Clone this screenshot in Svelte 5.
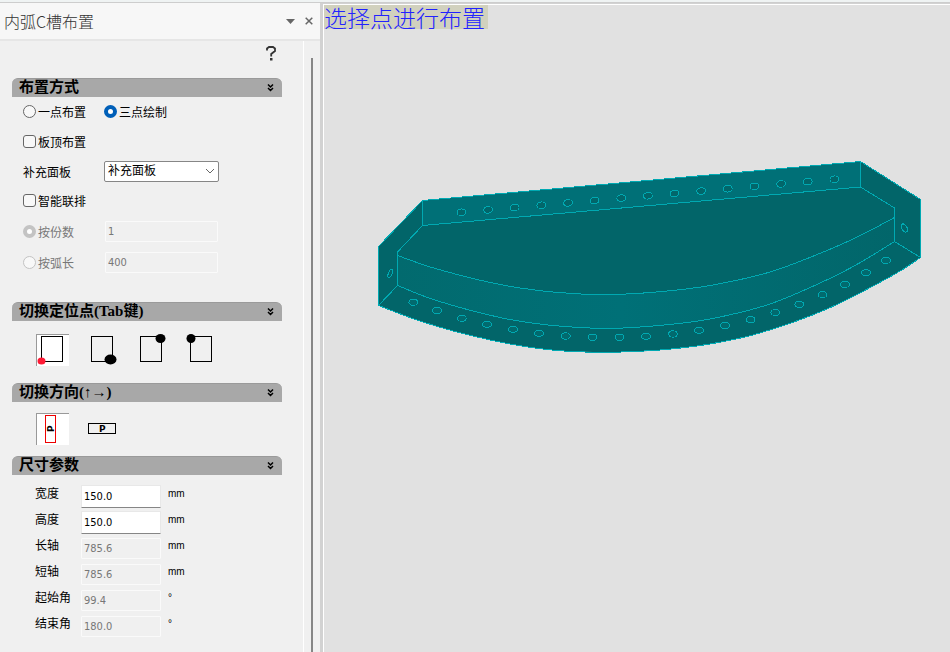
<script>
  let mode = $state('three');
  let panelTop = $state(false);
  let smartLayout = $state(false);
  let fillPanel = $state('补充面板');
  let anchor = $state('bl');
  let direction = $state('up');
  let open = $state({ mode: true, anchor: true, direction: true, size: true });

  const anchors = [
    { id: 'bl', label: '左下', x: 5, cx: 5.5, cy: 27, rx: 4, ry: 3.5 },
    { id: 'br', label: '右下', x: 5, cx: 24.5, cy: 25.5, rx: 6, ry: 5 },
    { id: 'tr', label: '右上', x: 4, cx: 24.5, cy: 4.5, rx: 5, ry: 4.5 },
    { id: 'tl', label: '左上', x: 4, cx: 5, cy: 4.5, rx: 4.5, ry: 4.5 }
  ];

  let sizes = $state([
    { id: 'width', label: '宽度', value: '150.0', unit: 'mm' },
    { id: 'height', label: '高度', value: '150.0', unit: 'mm' },
    { id: 'major', label: '长轴', value: '785.6', unit: 'mm', disabled: true },
    { id: 'minor', label: '短轴', value: '785.6', unit: 'mm', disabled: true },
    { id: 'start', label: '起始角', value: '99.4', unit: '°', disabled: true },
    { id: 'end', label: '结束角', value: '180.0', unit: '°', disabled: true }
  ]);

  // model arcs, in drawing units
  const plateArc = [[397.5, 255.5], [437, 269], [500, 284.5], [558, 292.5], [610, 294.5], [660, 291.7], [710, 285.5], [770, 272], [827, 250.5], [860, 235.7], [894.5, 217.5]];
  const innerArc = [[397.5, 285.5], [437, 300.7], [500, 317.5], [550, 325.2], [608, 328.4], [662, 325.2], [710, 319], [770, 304], [827, 279.8], [860, 262.7], [894.5, 241.5]];
  const outerArc = [[378.5, 305.5], [417, 320], [457, 332], [510, 344], [558, 350.6], [610, 352.3], [660, 350], [710, 344], [760, 333], [827, 309], [893, 275.2], [920.5, 257.5]];

  // Catmull-Rom through the points, as cubic segments
  function curve(pts) {
    let d = '';
    for (let i = 0; i < pts.length - 1; i++) {
      const a = pts[i - 1] ?? pts[i];
      const b = pts[i];
      const c = pts[i + 1];
      const e = pts[i + 2] ?? c;
      d += `C${b[0] + (c[0] - a[0]) / 6} ${b[1] + (c[1] - a[1]) / 6} ${c[0] - (e[0] - b[0]) / 6} ${c[1] - (e[1] - b[1]) / 6} ${c[0]} ${c[1]}`;
    }
    return d;
  }

  const plate = `M${plateArc[0]}` + curve(plateArc);
  const inner = `M${innerArc[0]}` + curve(innerArc);
  const outer = `M${outerArc[0]}` + curve(outerArc);
  const web = `${plate}L894.5 241.5${curve([...innerArc].reverse())}Z`;
  const body = `${outer}V199.5L860.5 161.5 422.5 200.5 378.5 246.5Z`;

  const topHoles = Array.from({ length: 15 }, (_, i) => [461.4 + i * 26.64, 212.3 - i * 2.36]);

  const arcHoles = [
    [413.3, 302.2], [437, 310.5], [461.8, 318.3], [487, 324.3], [513, 329.3],
    [539, 333.3], [565.8, 336], [592.5, 337.3], [619.4, 337.3], [646, 336.3],
    [673, 334], [699, 330.3], [725, 325.5], [750.6, 319.6], [775.3, 312.5],
    [799.3, 304.3], [822.5, 294.6], [845, 284.4], [866, 272.8], [886, 260.4]
  ];
</script>

{#snippet sectionHead(key, title)}
  <h2>
    <button class="section-head" aria-expanded={open[key]} onclick={() => (open[key] = !open[key])}>
      <span>{title}</span>
      <svg width="7" height="8" viewBox="0 0 7 8" aria-hidden="true">
        <path d="M1 .5 3.5 3 6 .5M1 4 3.5 6.5 6 4" />
      </svg>
    </button>
  </h2>
{/snippet}

<div class="app">
  <div class="strip"></div>
  <div class="main">
    <aside class="panel">
      <header class="titlebar">
        <h1>内弧C槽布置</h1>
        <button class="icon-btn" aria-label="菜单">
          <svg width="9" height="5" viewBox="0 0 9 5"><path d="M0 0h9L4.5 5z" fill="#666" /></svg>
        </button>
        <button class="icon-btn" aria-label="关闭">
          <svg width="8" height="8" viewBox="0 0 8 8"><path d="M.7 .7 7.3 7.3M7.3 .7 .7 7.3" stroke="#666" stroke-width="1.5" /></svg>
        </button>
      </header>

      <div class="scroll">
        <div class="content">
          <div class="help-row">
            <button class="icon-btn" aria-label="帮助">
              <svg width="10" height="15" viewBox="0 0 10 15">
                <path d="M1 4.5V2.5L3 1h4l2 1.5v2.5L5.2 8v2.5" fill="none" stroke="#333" stroke-width="1.8" />
                <path d="M4 12h2.5v2.5H4z" fill="#333" />
              </svg>
            </button>
          </div>

          <section class="mode">
            {@render sectionHead('mode', '布置方式')}
            {#if open.mode}
              <div class="options">
                <label class="check"><input type="radio" name="mode" value="one" bind:group={mode} />一点布置</label>
                <label class="check"><input type="radio" name="mode" value="three" bind:group={mode} />三点绘制</label>

                <label class="check wide"><input type="checkbox" bind:checked={panelTop} />板顶布置</label>

                <label for="fill">补充面板</label>
                <div class="select">
                  <select id="fill" bind:value={fillPanel}>
                    <option>补充面板</option>
                  </select>
                  <svg width="10" height="6" viewBox="0 0 10 6" aria-hidden="true"><path d="M1 1 5 5 9 1" /></svg>
                </div>

                <label class="check wide"><input type="checkbox" bind:checked={smartLayout} />智能联排</label>

                <label class="check off"><input type="radio" name="split" checked disabled />按份数</label>
                <input class="field" type="text" aria-label="份数" value="1" disabled />

                <label class="check off"><input type="radio" name="split" disabled />按弧长</label>
                <input class="field" type="text" aria-label="弧长" value="400" disabled />
              </div>
            {/if}
          </section>

          <section class="anchor">
            {@render sectionHead('anchor', '切换定位点(Tab键)')}
            {#if open.anchor}
              <div class="tools">
                {#each anchors as a (a.id)}
                  <button class="tool" class:active={anchor === a.id} aria-label={a.label} onclick={() => (anchor = a.id)}>
                    <svg width="33" height="33" viewBox="0 0 33 33">
                      <rect x={a.x + 0.5} y="2.5" width="21" height="25" fill="none" stroke="#000" />
                      <ellipse cx={a.cx} cy={a.cy} rx={a.rx} ry={a.ry} fill={anchor === a.id ? '#ff1a35' : '#000'} />
                    </svg>
                  </button>
                {/each}
              </div>
            {/if}
          </section>

          <section class="direction">
            {@render sectionHead('direction', '切换方向(↑→)')}
            {#if open.direction}
              <div class="tools">
                <button class="tool" class:active={direction === 'up'} aria-label="竖向" onclick={() => (direction = 'up')}>
                  <svg width="33" height="33" viewBox="0 0 33 33">
                    <rect x="9.5" y="2.5" width="10" height="27" fill="none" stroke={direction === 'up' ? '#e00' : '#000'} />
                    <text x="-19" y="18" transform="rotate(-90)">P</text>
                  </svg>
                </button>
                <button class="tool" class:active={direction === 'right'} aria-label="横向" onclick={() => (direction = 'right')}>
                  <svg width="33" height="33" viewBox="0 0 33 33">
                    <rect x="2.5" y="10.5" width="27" height="10" fill="none" stroke={direction === 'right' ? '#e00' : '#000'} />
                    <text x="13" y="19">P</text>
                  </svg>
                </button>
              </div>
            {/if}
          </section>

          <section>
            {@render sectionHead('size', '尺寸参数')}
            {#if open.size}
              <div class="sizes">
                {#each sizes as s (s.id)}
                  <label for={s.id}>{s.label}</label>
                  <input class="field" id={s.id} type="text" bind:value={s.value} disabled={s.disabled} />
                  <span class="unit">{s.unit}</span>
                {/each}
              </div>
            {/if}
          </section>
        </div>
        <div class="track"><div class="thumb"></div></div>
      </div>
    </aside>

    <main class="canvas">
      <p class="hint">选择点进行布置</p>
      <div class="model">
        <svg viewBox="378 161 543 192" role="img" aria-label="内弧C槽">
          <defs>
            <linearGradient id="web" x1="0" x2="1" y1="0" y2="0">
              <stop offset="0" stop-color="#026a6e" />
              <stop offset=".45" stop-color="#007077" />
              <stop offset="1" stop-color="#02666a" />
            </linearGradient>
          </defs>
          <path d={body} fill="#026569" />
          <path d="M422.5 200.5 860.5 161.5V187L422.5 225.5Z" fill="#007077" />
          <path d={web} fill="url(#web)" />
          <g class="edges" fill="none">
            <path d={body} />
            <path d="M378.5 305.5 397.5 285.5V252L422.5 225.5 860.5 187 894.5 208V241.5L920.5 257.5" />
            <path d="M422.5 200.5V225.5M860.5 161.5V187" />
            <path d={plate} />
            <path d={inner} />
            {#each topHoles as [x, y]}
              <ellipse cx={x} cy={y} rx="4.4" ry="3.3" transform="rotate(-6 {x} {y})" fill="#02666a" />
            {/each}
            {#each arcHoles as [x, y]}
              <ellipse cx={x} cy={y} rx="4.4" ry="3.2" fill="#026a6e" />
            {/each}
            <ellipse cx="390.3" cy="273.3" rx="1.8" ry="4.4" transform="rotate(22 390.3 273.3)" />
            <ellipse cx="904.4" cy="228" rx="2.6" ry="4.4" transform="rotate(-32 904.4 228)" />
          </g>
        </svg>
      </div>
    </main>
  </div>
</div>

<style>
  :global(body) {
    margin: 0;
    font-family: "DejaVu Sans Condensed", "Noto Sans CJK SC", sans-serif;
    font-size: 12px;
    color: #000;
  }

  h1, h2, p {
    margin: 0;
  }

  button, input, select {
    box-sizing: border-box;
    margin: 0;
    padding: 0;
    font: inherit;
    color: inherit;
  }

  .app {
    display: flex;
    flex-direction: column;
    min-height: 100vh;
  }

  .strip {
    box-sizing: border-box;
    height: 3px;
    background: #eff3f3;
    border-bottom: 1px solid #cdcdcd;
  }

  .main {
    display: flex;
    flex: 1;
    background: #d2d2d2;
  }

  .panel {
    display: flex;
    flex-direction: column;
    flex: none;
    width: 320px;
    background: #f0f0f0;
  }

  .titlebar {
    display: flex;
    align-items: center;
    gap: 10px;
    height: 36px;
    padding: 0 7px 0 4px;
    background: #f7f7f7;
    border-bottom: 2px solid #e6e6e6;
  }

  .titlebar h1 {
    flex: 1;
    font-family: "Noto Sans CJK SC", sans-serif;
    font-size: 16px;
    font-weight: 300;
    line-height: 20px;
    color: #333;
  }

  .icon-btn {
    display: flex;
    background: none;
    border: 0;
  }

  .scroll {
    display: flex;
    flex: 1;
  }

  .content {
    flex: 1;
    padding: 5px 21px 16px 12px;
  }

  .help-row {
    display: flex;
    justify-content: flex-end;
    height: 32px;
    padding-right: 6px;
  }

  .help-row .icon-btn {
    align-self: flex-start;
  }

  .track {
    width: 9px;
    padding: 17px 0 0 7px;
    border-left: 1px solid #fff;
  }

  .thumb {
    width: 2px;
    height: 100%;
    background: #868686;
  }

  .section-head {
    display: flex;
    align-items: center;
    justify-content: space-between;
    width: 100%;
    height: 19px;
    padding: 0 8px 1px 7px;
    background: #a8a8a8;
    border: 1px solid #9a9a9a;
    border-width: 1px 0 0;
    border-radius: 6px 6px 0 0;
    font-family: "Liberation Serif", "Noto Sans CJK SC", serif;
    font-size: 15px;
    font-weight: bold;
    line-height: 17px;
  }

  .section-head path {
    fill: none;
    stroke: #000;
    stroke-width: 1.5;
  }

  .mode {
    margin-bottom: 25px;
  }

  .anchor {
    margin-bottom: 17px;
  }

  .direction {
    margin-bottom: 11px;
  }

  .options {
    display: grid;
    grid-template-columns: 81px 115px;
    grid-template-rows: 28px 32px 28px 30px 32px 30px;
    align-items: center;
    padding-left: 11px;
  }

  .check {
    display: flex;
    align-items: center;
    gap: 2px;
  }

  .wide {
    grid-column: 1 / -1;
  }

  .off {
    color: #777;
  }

  .check input {
    appearance: none;
    width: 13px;
    height: 13px;
    background: #f8f8f8;
    border: 1px solid #666;
    border-radius: 3px;
  }

  .check input[type="radio"] {
    border-radius: 50%;
  }

  .check input:checked {
    background: #fff;
    border: 4px solid #005fb8;
  }

  .check input:disabled {
    border-color: #c3c3c3;
  }

  .select {
    display: grid;
    align-items: center;
  }

  .select select,
  .select svg {
    grid-area: 1 / 1;
  }

  .select select {
    appearance: none;
    height: 21px;
    padding: 0 20px 0 3px;
    background: #fff;
    border: 1px solid #868686;
    border-radius: 2px;
  }

  .select svg {
    justify-self: end;
    margin-right: 4px;
    pointer-events: none;
  }

  .select path {
    fill: none;
    stroke: #666;
  }

  .field {
    width: 100%;
    height: 23px;
    padding: 0 2px;
    background: #fff;
    border: 1px solid #e8e8e8;
    border-bottom-color: #868686;
    border-radius: 1px;
    font-size: 11px;
  }

  .field:disabled {
    height: 21px;
    background: #f0f0f0;
    border-color: #fafafa;
    color: #777;
  }

  .options .field {
    justify-self: center;
    width: 113px;
  }

  .tools {
    display: flex;
    gap: 17px;
    padding: 13px 0 0 24px;
  }

  .direction .tools {
    padding-top: 11px;
  }

  .tool {
    width: 33px;
    height: 32px;
    background: none;
    border: 0;
  }

  .tool svg {
    display: block;
  }

  .tool text {
    font-family: "DejaVu Sans", sans-serif;
    font-size: 9px;
    font-weight: bold;
  }

  .active {
    background: #fff;
    box-shadow: inset 1px 1px #999;
  }

  .sizes {
    display: grid;
    grid-template-columns: 46px 80px auto;
    grid-auto-rows: 26px;
    align-items: center;
    padding: 8px 0 0 23px;
  }

  .sizes label,
  .unit {
    align-self: start;
    line-height: 22px;
  }

  .unit {
    padding-left: 7px;
    font-family: "Liberation Sans", sans-serif;
    font-size: 10px;
  }

  .canvas {
    flex: 1;
    min-width: 0;
    margin: 1px 0 0 3px;
    background: #e1e1e1;
    border: 1px solid #fff;
    border-width: 1px 0 0 1px;
  }

  .hint {
    width: fit-content;
    padding-right: 3px;
    background: #d1d1be;
    color: #22f;
    font-family: "Noto Sans CJK SC", sans-serif;
    font-size: 23px;
    font-weight: 300;
    line-height: 24px;
  }

  .model {
    padding: 132px 29px 0 54px;
  }

  .model svg {
    display: block;
    width: 100%;
  }

  .edges {
    stroke: #00a9b2;
    shape-rendering: crispEdges;
  }
</style>
